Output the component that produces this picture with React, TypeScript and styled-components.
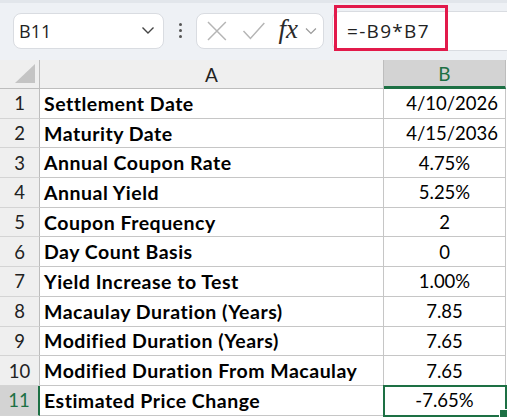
import styled, { createGlobalStyle } from "styled-components";

const rows: { label: string; value: string; align: "right" | "center" }[] = [
  { label: "Settlement Date", value: "4/10/2026", align: "right" },
  { label: "Maturity Date", value: "4/15/2036", align: "right" },
  { label: "Annual Coupon Rate", value: "4.75%", align: "center" },
  { label: "Annual Yield", value: "5.25%", align: "center" },
  { label: "Coupon Frequency", value: "2", align: "center" },
  { label: "Day Count Basis", value: "0", align: "center" },
  { label: "Yield Increase to Test", value: "1.00%", align: "center" },
  { label: "Macaulay Duration (Years)", value: "7.85", align: "center" },
  { label: "Modified Duration (Years)", value: "7.65", align: "center" },
  { label: "Modified Duration From Macaulay", value: "7.65", align: "center" },
  { label: "Estimated Price Change", value: "-7.65%", align: "center" },
];

const ACTIVE_ROW = 11;

function App() {
  return (
    <Page>
      <GlobalStyle />
      <Toolbar>
        <NameBox>
          <span>B11</span>
          <svg width="14" height="9" viewBox="0 0 14 9">
            <path d="M1.5 1.5 L7 7 L12.5 1.5" fill="none" stroke="#444" strokeWidth="1.4" />
          </svg>
        </NameBox>
        <Dots>
          <i />
          <i />
          <i />
        </Dots>
        <FxBox>
          <svg width="22" height="22" viewBox="0 0 22 22">
            <path d="M2 2 L20 20 M20 2 L2 20" stroke="#b5b5b5" strokeWidth="1.5" />
          </svg>
          <svg width="24" height="20" viewBox="0 0 24 20">
            <path d="M1.5 10 L8.5 17.5 L22.5 2" fill="none" stroke="#b5b5b5" strokeWidth="1.5" />
          </svg>
          <FxLabel>fx</FxLabel>
          <svg width="12" height="8" viewBox="0 0 12 8">
            <path d="M1 1.5 L6 6.5 L11 1.5" fill="none" stroke="#999" strokeWidth="1.2" />
          </svg>
        </FxBox>
        <FormulaInput>
          <FormulaText>=-B9*B7</FormulaText>
          <Highlight />
        </FormulaInput>
      </Toolbar>
      <Sheet>
        <Corner>
          <svg width="20" height="19" viewBox="0 0 20 19">
            <path d="M20 0 L20 19 L0 19 Z" fill="#c4c4c4" />
          </svg>
        </Corner>
        <ColHead>A</ColHead>
        <ColHead $active>B</ColHead>
        {rows.map((r, i) => {
          const n = i + 1;
          const active = n === ACTIVE_ROW;
          return [
            <RowHead key={`h${n}`} $active={active}>
              {n}
            </RowHead>,
            <LabelCell key={`a${n}`}>{r.label}</LabelCell>,
            <ValueCell key={`b${n}`} $align={r.align} $active={active}>
              {r.value}
              {active && <Handle />}
            </ValueCell>,
          ];
        })}
      </Sheet>
    </Page>
  );
}

const GlobalStyle = createGlobalStyle`
  html, body {
    margin: 0;
    padding: 0;
    background: #ffffff;
  }
  body {
    font-family: Lato, "Open Sans", sans-serif;
    overflow: hidden;
  }
`;

const Page = styled.div`
  width: 507px;
  height: 418px;
  overflow: hidden;
  background: #ffffff;
`;

const Toolbar = styled.div`
  height: 57px;
  border-top: 3px solid #e2e6eb;
  background: #eef1f5;
  display: flex;
  align-items: center;
  padding-left: 13px;
  box-sizing: content-box;
`;

const NameBox = styled.div`
  width: 151px;
  height: 36px;
  box-sizing: border-box;
  margin-top: -2px;
  background: #ffffff;
  border: 1px solid #d9dce1;
  border-radius: 8px;
  display: flex;
  align-items: center;
  justify-content: space-between;
  padding: 0 8px 0 5px;
  font-family: "Open Sans", sans-serif;
  font-size: 18px;
  color: #222;
`;

const Dots = styled.div`
  width: 32px;
  margin-top: -2px;
  display: flex;
  flex-direction: column;
  align-items: center;
  gap: 3px;

  i {
    width: 3px;
    height: 3px;
    border-radius: 50%;
    background: #555;
  }
`;

const FxBox = styled.div`
  width: 128px;
  height: 36px;
  box-sizing: border-box;
  margin-top: -2px;
  background: #ffffff;
  border: 1px solid #d9dce1;
  border-radius: 8px;
  display: flex;
  align-items: center;
  padding: 0 6px 0 9px;

  svg:nth-child(2) {
    margin-left: 14px;
  }
  svg:last-child {
    margin-left: 7px;
  }
`;

const FxLabel = styled.span`
  margin-left: 13px;
  font-family: "Liberation Serif", serif;
  font-style: italic;
  font-size: 27px;
  color: #2a2a2a;
  line-height: 1;
  margin-top: -3px;
`;

const FormulaInput = styled.div`
  position: relative;
  margin-left: 8px;
  flex: 1;
  height: 38px;
  margin-top: -2px;
  background: #ffffff;
  border: 1px solid #d9dce1;
  border-right: none;
  border-radius: 8px 0 0 8px;
  display: flex;
  align-items: center;
  padding-left: 14px;
`;

const FormulaText = styled.span`
  font-family: "Open Sans", sans-serif;
  font-size: 19px;
  color: #222;
  letter-spacing: 1.3px;
`;

const Highlight = styled.div`
  position: absolute;
  left: 1px;
  top: -7px;
  width: 114px;
  height: 46px;
  box-sizing: border-box;
  border: 3px solid #e21a4b;
`;

const Sheet = styled.div`
  display: grid;
  grid-template-columns: 40px 344px 122px 1px;
  grid-template-rows: 29px repeat(11, 29.7px);
  font-size: 18.5px;
  color: #000;

  & > * {
    box-sizing: border-box;
  }
  & > :nth-child(3n) {
    grid-column: 3;
  }
`;

const Corner = styled.div`
  background: #efefef;
  border-right: 1px solid #bdbdbd;
  border-bottom: 1px solid #bdbdbd;
  display: flex;
  align-items: flex-end;
  justify-content: flex-end;
  padding: 0 4px 5px 0;
`;

const ColHead = styled.div<{ $active?: boolean }>`
  background: ${(p) => (p.$active ? "#d3d3d3" : "#efefef")};
  color: ${(p) => (p.$active ? "#1d7044" : "#222")};
  border-right: 1px solid #bdbdbd;
  border-bottom: ${(p) => (p.$active ? "3px solid #1d7044" : "1px solid #bdbdbd")};
  display: flex;
  align-items: center;
  justify-content: center;
  font-size: 19px;
`;

const RowHead = styled.div<{ $active?: boolean }>`
  background: ${(p) => (p.$active ? "#d3d3d3" : "#efefef")};
  color: ${(p) => (p.$active ? "#1d7044" : "#222")};
  border-right: ${(p) => (p.$active ? "2px solid #1d7044" : "1px solid #bdbdbd")};
  border-bottom: 1px solid #d4d4d4;
  display: flex;
  align-items: center;
  justify-content: center;
  grid-column: 1;
`;

const LabelCell = styled.div`
  border-right: 1px solid #c6c6c6;
  border-bottom: 1px solid #c6c6c6;
  display: flex;
  align-items: center;
  padding-left: 4px;
  font-weight: 700;
  font-size: 19.5px;
  letter-spacing: 0.5px;
  white-space: nowrap;
`;

const ValueCell = styled.div<{ $align: "right" | "center"; $active?: boolean }>`
  position: relative;
  border-right: 1px solid #c6c6c6;
  border-bottom: 1px solid #c6c6c6;
  display: flex;
  align-items: center;
  justify-content: ${(p) => (p.$align === "right" ? "flex-end" : "center")};
  padding-right: ${(p) => (p.$align === "right" ? "7px" : "0")};
  ${(p) =>
    p.$active &&
    `
    outline: 2px solid #1d7044;
    outline-offset: -1px;
    z-index: 1;
  `}
`;

const Handle = styled.span`
  position: absolute;
  right: -3px;
  bottom: -3px;
  width: 7px;
  height: 7px;
  background: #1d7044;
  border: 1px solid #ffffff;
`;

export default App;
